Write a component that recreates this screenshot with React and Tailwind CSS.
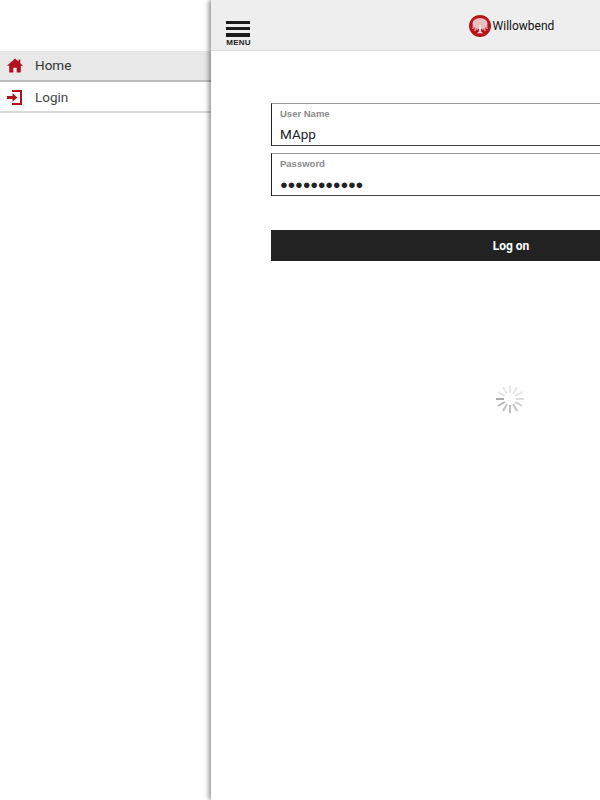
import React from "react";

const font = { fontFamily: '"Roboto", sans-serif' };

const spokes = [0, 30, 60, 90, 120, 150, 180, 210, 240, 270, 300, 330];
const spokeColors = {
  270: "#a8a8a8",
  240: "#b4b4b4",
  210: "#c0c0c0",
  180: "#bbbbbb",
  150: "#c4c4c4",
  120: "#cfcfcf",
  90: "#dcdcdc",
  60: "#e2e2e2",
  30: "#e6e6e6",
  0: "#e8e8e8",
  330: "#e8e8e8",
  300: "#e4e4e4",
};

const HomeIcon = () => (
  <svg width="16" height="15" viewBox="0 0 16 15">
    <path d="M8 0.5 L11.5 3.6 V1.5 H13.3 V5.2 L16 7.8 H13.8 V14.5 H9.7 V9.7 H6.3 V14.5 H2.2 V7.8 H0 Z" fill="#b1101c" />
  </svg>
);

const LoginIcon = () => (
  <svg width="15" height="15" viewBox="0 0 15 15">
    <path d="M5 1 H14 V14 H5" fill="none" stroke="#b1101c" strokeWidth="2" />
    <path d="M0 6 H5.5 V3.2 L10.4 7.5 L5.5 11.8 V9 H0 Z" fill="#b1101c" />
  </svg>
);

const Logo = () => (
  <svg width="22" height="22" viewBox="0 0 22 22">
    <circle cx="11" cy="11" r="11" fill="#b7141c" />
    <ellipse cx="11" cy="8.5" rx="7.5" ry="5.5" fill="#e9bfc0" />
    <path d="M4.5 9 L4 14 M6.5 11 L6 16 M8.5 12 L8 15 M13.5 12 L14 15 M15.5 11 L16 16 M17.5 9 L18 14" stroke="#e9bfc0" strokeWidth="1.2" />
    <path d="M10.2 10 H11.8 L12.2 17 L14.5 18.2 H7.5 L9.8 17 Z" fill="#f4e2e2" />
  </svg>
);

const Spinner = () => (
  <svg width="30" height="30" viewBox="0 0 30 30">
    {spokes.map((a) => (
      <rect
        key={a}
        x="14"
        y="1"
        width="2"
        height="8"
        fill={spokeColors[a]}
        transform={`rotate(${a} 15 15)`}
      />
    ))}
  </svg>
);

const Field = ({ label, children }) => (
  <div className="h-[43px] bg-white border-t border-t-[#999999] border-l border-l-[#222222] border-b border-b-[#444444] pl-2 pt-[3px]">
    <div
      className="text-[9.5px] leading-[13px] font-bold text-[#8a8a8a]"
      style={{ fontFamily: '"Liberation Sans", sans-serif' }}
    >
      {label}
    </div>
    {children}
  </div>
);

export default function App() {
  return (
    <div className="relative flex w-[600px] h-[800px] overflow-hidden bg-white" style={font}>
      {/* side menu */}
      <div className="w-[211px] shrink-0 pt-[51px] bg-white">
        <div className="flex items-center h-[31px] bg-[#e8e8e8] border-b-2 border-b-[#bcbcbc]">
          <div className="w-[35px] pl-[7px] flex"><HomeIcon /></div>
          <span className="text-[13.5px] text-[#333333]">Home</span>
        </div>
        <div className="flex items-center h-[31px] pt-[1px] border-b-2 border-b-[#d8d8d8]">
          <div className="w-[35px] pl-[7px] flex"><LoginIcon /></div>
          <span className="text-[13.5px] text-[#444444]">Login</span>
        </div>
      </div>

      {/* main panel, runs off the right edge */}
      <div className="relative w-[600px] shrink-0 h-full bg-white shadow-[-2px_0_5px_rgba(0,0,0,0.45)]">
        <div className="relative flex items-center justify-center h-[51px] bg-[#eeeeee] border-b border-b-[#dddddd]">
          <div className="absolute left-[15px] top-[21px] w-[25px]">
            <div className="h-[3px] w-[24px] bg-[#1c1c1c]" />
            <div className="h-[3px] w-[24px] mt-[3px] bg-[#1c1c1c]" />
            <div className="h-[4px] w-[24px] mt-[3px] bg-[#1c1c1c]" />
            <div
              className="text-[8px] leading-[9px] mt-[1px] font-bold text-[#222222] text-center tracking-[0.2px]"
              style={{ fontFamily: '"Liberation Sans", sans-serif' }}
            >
              MENU
            </div>
          </div>
          <div className="flex items-center gap-[2px] mt-[1px] ml-[1px]">
            <Logo />
            <span className="text-[12px] text-[#111111]">Willowbend</span>
          </div>
        </div>

        <div className="pl-[60px] pr-[60px] pt-[52px]">
          <Field label="User Name">
            <div className="text-[13.5px] leading-[18px] mt-[5px] text-[#222222]">MApp</div>
          </Field>
          <div className="mt-[7px]">
            <Field label="Password">
              <div className="text-[13px] leading-[18px] mt-[6px] tracking-[-0.3px] text-[#222222]">●●●●●●●●●●●</div>
            </Field>
          </div>
          <button className="mt-[34px] pt-[1px] w-full h-[31px] bg-[#222222] text-white text-[12px] font-bold">
            Log on
          </button>
        </div>

        <div className="absolute left-[284px] top-[384px]">
          <Spinner />
        </div>
      </div>
    </div>
  );
}
